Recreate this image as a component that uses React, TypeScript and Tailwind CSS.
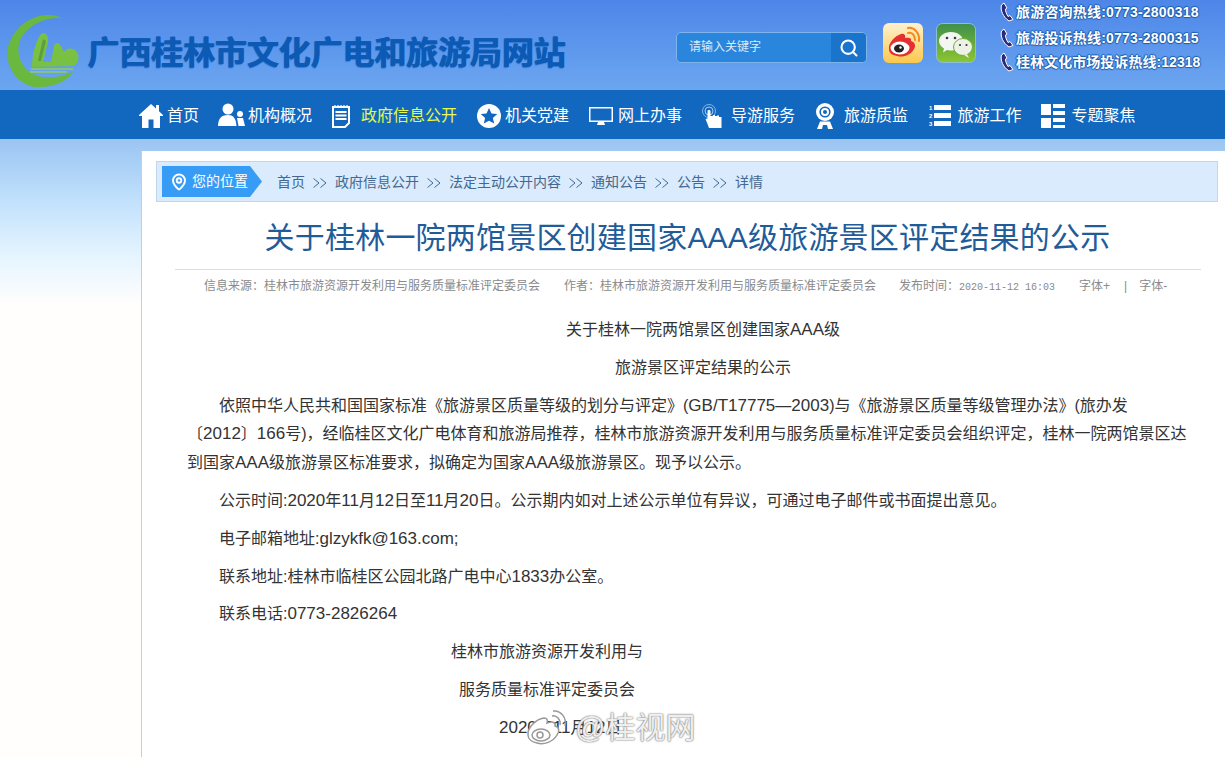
import type { ReactNode } from 'react';
import { Search, MapPin } from 'lucide-react';

const FONT = "font-['Liberation_Sans','Noto_Sans_CJK_SC',sans-serif]";

const HomeIcon = () => (
  <svg width="24" height="25" viewBox="0 0 24 25" fill="#fff">
    <path d="M12 1 L17 5.5 V2 H20 V8.2 L24 12 V13 H21 V25 H14.5 V16.5 H9.5 V25 H3 V13 H0 V12 Z" />
  </svg>
);

const PeopleIcon = () => (
  <svg width="27" height="25" viewBox="0 0 27 25" fill="#fff">
    <circle cx="10" cy="6" r="5.5" />
    <path d="M0 23 C0 15 4 12 10 12 C15 12 18 15 18.5 23 Z" />
    <circle cx="22" cy="11" r="3" />
    <path d="M19 15 H25 L27 23 H20.5 Z" />
  </svg>
);

const NotepadIcon = () => (
  <svg width="20" height="24" viewBox="0 0 20 24" fill="none" stroke="#fff">
    <path d="M2 3 H18 V19 L14 23 H2 Z" strokeWidth="2" />
    <path d="M4 1 V4 M7 1 V4 M10 1 V4 M13 1 V4 M16 1 V4" strokeWidth="1.2" />
    <path d="M4.5 8 H15.5 M4.5 11.5 H15.5 M4.5 15 H15.5" strokeWidth="2" />
  </svg>
);

const StarIcon = () => (
  <svg width="24" height="24" viewBox="0 0 24 24">
    <circle cx="12" cy="12" r="12" fill="#fff" />
    <path d="M12 4 L14.5 9.4 L20.2 10 L15.9 13.9 L17.2 19.6 L12 16.7 L6.8 19.6 L8.1 13.9 L3.8 10 L9.5 9.4 Z" fill="#1268bf" />
  </svg>
);

const MonitorIcon = () => (
  <svg width="24" height="24" viewBox="0 0 24 24" fill="#fff">
    <path d="M0 3 H24 V18 H0 Z M1.5 4.5 V16.5 H22.5 V4.5 Z" fillRule="evenodd" />
    <path d="M9 18 H15 L16 21 H8 Z" />
  </svg>
);

const TouchIcon = () => (
  <svg width="20" height="24" viewBox="0 0 20 24">
    <circle cx="7" cy="7" r="6.5" fill="none" stroke="#9fc6ee" strokeWidth="0.8" />
    <circle cx="7" cy="7" r="4" fill="none" stroke="#cfe2f7" strokeWidth="0.8" />
    <path d="M5.5 7 C5.5 5.5 8.5 5.5 8.5 7 V12 H11 V11 H13 V12 H15 V11.5 H17 V13 H19.5 V24 H7 L5.5 20 L3.5 15 L5.5 14.5 Z" fill="#fff" />
  </svg>
);

const WebcamIcon = () => (
  <svg width="20" height="26" viewBox="0 0 20 26">
    <circle cx="10" cy="9" r="9" fill="#fff" />
    <circle cx="10" cy="9" r="5.6" fill="#1268bf" />
    <circle cx="10" cy="9" r="4" fill="#fff" />
    <circle cx="10" cy="9" r="2" fill="#1268bf" />
    <path d="M5 18.5 H15 L18 26 H13 L12 22 H8 L7 26 H2 Z" fill="#fff" />
  </svg>
);

const NumberedListIcon = () => (
  <div className="flex items-center gap-[2px]">
    <div className="flex flex-col text-[6px] leading-[8px] text-white font-bold">
      <span>1</span>
      <span>2</span>
      <span>3</span>
    </div>
    <div className="flex flex-col gap-[3px]">
      <div className="h-[5px] w-[17px] bg-white" />
      <div className="h-[5px] w-[17px] bg-white" />
      <div className="h-[5px] w-[17px] bg-white" />
    </div>
  </div>
);

const TopicsIcon = () => (
  <svg width="24" height="24" viewBox="0 0 24 24" fill="#fff">
    <rect x="0" y="0" width="10" height="11" />
    <rect x="0" y="14" width="10" height="10" />
    <rect x="12" y="0" width="12" height="4" />
    <rect x="12" y="7" width="12" height="4" />
    <rect x="12" y="14" width="12" height="4" />
    <rect x="12" y="21" width="12" height="3" />
  </svg>
);

const Logo = () => (
  <svg width="72" height="76" viewBox="0 0 72 76">
    <path d="M55 6 C40 -2 10 5 1 35 C-3 58 15 76 32 75 C50 75 62 67 66 60 C52 66 38 67 28 63 C12 56 8 38 14 26 C22 12 38 5 55 6 Z" fill="#6bb83f" />
    <path d="M34 22 C38 19 42 24 41 30 L36 50 H44 L47 34 C48 30 52 30 54 34 L57 40 C59 36 66 35 70 40 C73 45 71 52 66 54 L25 55 C25 44 28 30 34 22 Z" fill="#78c142" />
    <path d="M36 27 L31 49 H34 L39 29 Z" fill="#5f9f3c" />
    <path d="M24 57 H66 M23 60 H60" stroke="#8fce62" strokeWidth="1.5" />
  </svg>
);

const WeiboIcon = () => (
  <svg width="40" height="40" viewBox="0 0 40 40">
    <defs>
      <linearGradient id="wb" x1="0" y1="0" x2="0" y2="1">
        <stop offset="0" stopColor="#fff1d0" />
        <stop offset="1" stopColor="#fbc84a" />
      </linearGradient>
    </defs>
    <rect width="40" height="40" rx="6" fill="url(#wb)" />
    <path d="M6 26 C5 20 12 13 18 11 C21 10 23 12 22 15 C26 14 29 15 28 18 C32 19 33 23 31 26 C28 32 20 35 14 33 C9 32 6 30 6 26 Z" fill="#e62f2f" />
    <ellipse cx="17" cy="25" rx="9.5" ry="6.5" fill="#fff" />
    <ellipse cx="16" cy="25.5" rx="5" ry="4" fill="#222" />
    <circle cx="17.5" cy="24.5" r="1.2" fill="#fff" />
    <path d="M25 10 C29 9 32 12 32 17 M25 5 C31 4 37 10 36 18" fill="none" stroke="#f08a1d" strokeWidth="2" strokeLinecap="round" />
  </svg>
);

const WechatIcon = () => (
  <svg width="40" height="40" viewBox="0 0 40 40">
    <defs>
      <linearGradient id="wx" x1="0" y1="0" x2="0" y2="1">
        <stop offset="0" stopColor="#3f8f4a" />
        <stop offset="1" stopColor="#8cc62f" />
      </linearGradient>
    </defs>
    <rect x="0.5" y="0.5" width="39" height="39" rx="6" fill="url(#wx)" stroke="#8fbfd8" />
    <path d="M15 9 C8 9 3 13 3 18 C3 21 5 24 8 25.5 L7 29.5 L11 27 C13 27.5 15 27.5 16 27.5 C22 27.5 27 23 27 18 C27 13 22 9 15 9 Z" fill="#f4f6f1" />
    <circle cx="11" cy="15" r="1.3" fill="#3a3a3a" />
    <circle cx="19" cy="15" r="1.3" fill="#3a3a3a" />
    <ellipse cx="27" cy="24" rx="9.5" ry="8.5" fill="#eef2e6" stroke="#6fae3b" strokeWidth="1" />
    <path d="M31 31 L33 35 L28 32 Z" fill="#eef2e6" />
    <circle cx="24" cy="22" r="1.1" fill="#3a3a3a" />
    <circle cx="30.5" cy="22" r="1.1" fill="#3a3a3a" />
  </svg>
);

const PhoneIcon = () => (
  <svg width="14" height="20" viewBox="0 0 14 20" className="shrink-0">
    <path d="M4 1 L1.5 3 C0 8 3 15 9 19 L13 17.5 L10 13.5 L8 14.5 C6.5 12 5.5 9.5 5.5 7 L7 6 Z" fill="#2b2a7d" stroke="#fff" strokeWidth="1" />
  </svg>
);

const Chevrons = () => (
  <svg width="14" height="10" viewBox="0 0 14 10" fill="none" stroke="#44688f" strokeWidth="1" className="mx-[8px] shrink-0">
    <path d="M0.5 0.5 L6 5 L0.5 9.5 M7.5 0.5 L13 5 L7.5 9.5" />
  </svg>
);

const navItems = [
  { icon: <HomeIcon />, label: '首页', cls: 'gap-[4px]' },
  { icon: <PeopleIcon />, label: '机构概况', cls: 'gap-[3px]' },
  { icon: <NotepadIcon />, label: '政府信息公开', cls: 'gap-[10px]', active: true },
  { icon: <StarIcon />, label: '机关党建', cls: 'gap-[4px] ml-[1px]' },
  { icon: <MonitorIcon />, label: '网上办事', cls: 'gap-[5px] ml-[1px]' },
  { icon: <TouchIcon />, label: '导游服务', cls: 'gap-[9px] ml-[1px]' },
  { icon: <WebcamIcon />, label: '旅游质监', cls: 'gap-[9px] ml-[1px]' },
  { icon: <NumberedListIcon />, label: '旅游工作', cls: 'gap-[6px] ml-[2px]' },
  { icon: <TopicsIcon />, label: '专题聚焦', cls: 'gap-[6px] ml-[1px]' },
];

const hotlines = ['旅游咨询热线:0773-2800318', '旅游投诉热线:0773-2800315', '桂林文化市场投诉热线:12318'];
const crumbs = ['首页', '政府信息公开', '法定主动公开内容', '通知公告', '公告', '详情'];

// 正文里的拉丁字符比中文略大
const Lat = ({ children }: { children: ReactNode }) => <span className="text-[17px]">{children}</span>;

const App = () => {
  return (
    <div className={`${FONT} h-[757px] overflow-hidden bg-white relative`}>
      <header className="h-[90px] bg-gradient-to-b from-[#4d86e8] to-[#6ca6f0] flex">
        <div className="pl-[7px] pt-[12px] shrink-0">
          <Logo />
        </div>
        <div className="w-[486px] pl-[8px] pt-[33px] shrink-0 text-[32px] leading-[40px] tracking-[-0.12px] font-bold text-[#0c5ab4] whitespace-nowrap [text-shadow:1px_0_0_#0c5ab4,0_1px_1px_#2f78d0]">
          广西桂林市文化广电和旅游局网站
        </div>
        <div className="ml-[111px] mt-[32px] w-[191px] h-[31px] flex rounded-[5px] border border-[#7db4ee] bg-[#2a85dc] overflow-hidden shrink-0">
          <div className="flex-1 pl-[12px] text-[12px] leading-[28px] text-[#d9ebfb]">请输入关键字</div>
          <div className="w-[35px] bg-[#1a74cc] flex items-center justify-center">
            <Search size={20} color="#fff" strokeWidth={2.5} />
          </div>
        </div>
        <div className="ml-[16px] mt-[23px] flex gap-[13px] shrink-0 h-[40px]">
          <WeiboIcon />
          <WechatIcon />
        </div>
        <div className="ml-[24px] pt-[2px] shrink-0 flex flex-col">
          {hotlines.map((line, i) => (
            <div key={line} className={`flex items-center gap-[2px] h-[20px] ${i === 1 ? 'mt-[6px]' : i === 2 ? 'mt-[4px]' : ''}`}>
              <PhoneIcon />
              <span className={`text-[14px] font-bold text-white whitespace-nowrap [text-shadow:1px_0_1px_#1a5fb0,-1px_0_1px_#1a5fb0,0_1px_1px_#1a5fb0,0_-1px_1px_#1a5fb0] ${i < 2 ? 'tracking-[0.2px]' : 'tracking-[0.05px]'}`}>
                {line}
              </span>
            </div>
          ))}
        </div>
      </header>

      <nav className="h-[49px] pt-[2px] bg-[#1268bf] flex items-center pl-[139px] gap-[19px]">
        {navItems.map((item) => (
          <div key={item.label} className={`flex items-center ${item.cls}`}>
            {item.icon}
            <span className={`text-[16px] whitespace-nowrap ${item.active ? 'text-[#e6f94c]' : 'text-white'}`}>{item.label}</span>
          </div>
        ))}
      </nav>

      <div className="h-[618px] bg-[linear-gradient(180deg,#9ac4f2_0,#c0e0fc_60px,#e4f4ff_115px,#fffefc_165px)] pt-[12px] pl-[141px]">
        <main className="h-full bg-white border-l border-[#bcd0e0] pt-[10px]">
          <div className="ml-[14px] w-[1062px] h-[41px] bg-[#d9ebfd] border border-[#c0d6ea] flex items-center pl-[5px]">
            <div className="w-[100px] h-[31px] bg-[#379cf5] flex items-center text-white text-[14px] [clip-path:polygon(0_0,88%_0,100%_50%,88%_100%,0_100%)]">
              <MapPin size={18} strokeWidth={2.5} className="ml-[8px] mr-[4px]" />
              您的位置
            </div>
            <div className="flex items-center ml-[15px] pt-[2px] text-[14px] text-[#44688f]">
              {crumbs.map((c, i) => (
                <span key={c} className="flex items-center">
                  {i > 0 && <Chevrons />}
                  {c}
                </span>
              ))}
            </div>
          </div>

          <h1 className="mt-[15px] text-center text-[30px] leading-[42px] tracking-[0.2px] font-normal text-[#1f5c99] w-[1091px]">
            关于桂林一院两馆景区创建国家AAA级旅游景区评定结果的公示
          </h1>

          <div className="mt-[10px] ml-[33px] w-[1026px] border-t border-[#dedede] pt-[8px] pl-[29px] flex text-[12px] leading-[16px] text-[#8a8a8a] whitespace-nowrap">
            <span>信息来源：桂林市旅游资源开发利用与服务质量标准评定委员会</span>
            <span className="ml-[24px]">作者：桂林市旅游资源开发利用与服务质量标准评定委员会</span>
            <span className="ml-[23px]">
              发布时间：<span className="font-['Liberation_Mono',monospace] text-[10px]">2020-11-12 16:03</span>
            </span>
            <span className="ml-[24px]">字体+</span>
            <span className="ml-[14px]">|</span>
            <span className="ml-[12px]">字体-</span>
          </div>

          <article className="mt-[20px] ml-[45px] w-[1000px] text-[16px] leading-[28.8px] text-[#333] [&>p]:mb-[9px]">
            <p className="pl-[379px]">关于桂林一院两馆景区创建国家<Lat>AAA</Lat>级</p>
            <p className="pl-[428px]">旅游景区评定结果的公示</p>
            <p className="indent-[32px]">
              依照中华人民共和国国家标准《旅游景区质量等级的划分与评定》(<Lat>GB/T17775</Lat>—<Lat>2003</Lat>)与《旅游景区质量等级管理办法》(旅办发
              <br />
              〔<Lat>2012</Lat>〕<Lat>166</Lat>号)，经临桂区文化广电体育和旅游局推荐，桂林市旅游资源开发利用与服务质量标准评定委员会组织评定，桂林一院两馆景区达
              <br />
              到国家<Lat>AAA</Lat>级旅游景区标准要求，拟确定为国家<Lat>AAA</Lat>级旅游景区。现予以公示。
            </p>
            <p className="indent-[32px]">公示时间:<Lat>2020</Lat>年<Lat>11</Lat>月<Lat>12</Lat>日至<Lat>11</Lat>月<Lat>20</Lat>日。公示期内如对上述公示单位有异议，可通过电子邮件或书面提出意见。</p>
            <p className="indent-[32px]">电子邮箱地址:<Lat>glzykfk@163.com;</Lat></p>
            <p className="indent-[32px]">联系地址:桂林市临桂区公园北路广电中心<Lat>1833</Lat>办公室。</p>
            <p className="indent-[32px]">联系电话:<Lat>0773-2826264</Lat></p>
            <p className="pl-[264px]">桂林市旅游资源开发利用与</p>
            <p className="pl-[272px]">服务质量标准评定委员会</p>
            <p className="pl-[312px]"><Lat>2020</Lat>年<Lat>11</Lat>月<Lat>12</Lat>日</p>
          </article>
        </main>
      </div>

      {/* 微博水印 */}
      <div className="absolute left-[525px] top-[707px] flex items-center text-[30px] leading-[42px] text-[#eee] [text-shadow:0_0_2px_#777,0_0_1px_#777]">
        <svg width="46" height="38" viewBox="0 0 46 38" fill="none" stroke="#999" strokeWidth="1.5">
          <path d="M3 26 C2 19 11 10 19 9 C22 9 23 11 22 14 C27 12 31 13 30 17 C34 18 35 22 32 26 C28 33 19 36 12 34 C7 33 3 30 3 26 Z" fill="#fff" />
          <ellipse cx="16" cy="26" rx="9" ry="6" />
          <circle cx="15" cy="26" r="3" />
          <path d="M27 7 C32 6 36 11 35 16 M28 2 C36 1 42 9 40 17" />
        </svg>
        <span className="ml-[4px]">@桂视网</span>
      </div>
    </div>
  );
};

export default App;
